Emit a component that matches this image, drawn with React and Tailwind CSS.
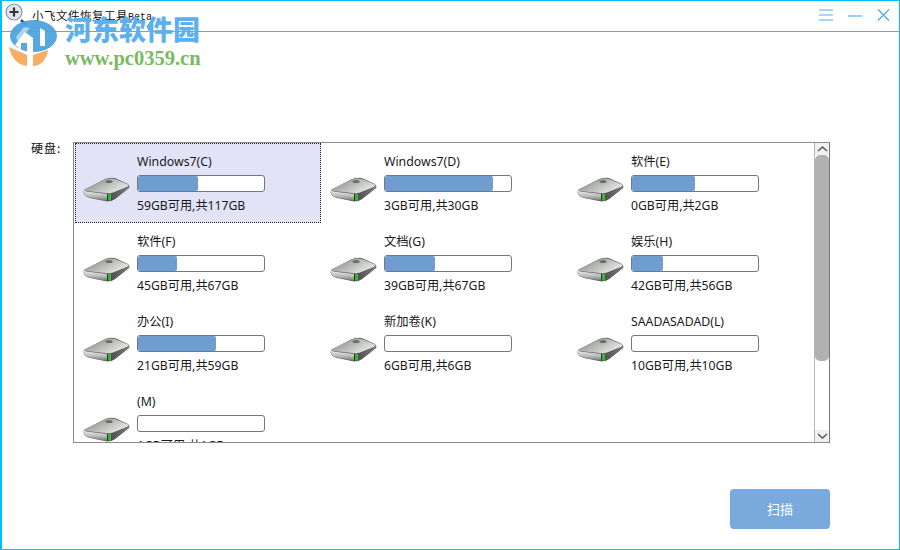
import React from "react";

const drives = [
  { n: "Windows7(C)", u: 60, t: "59GB可用,共117GB", sel: true },
  { n: "Windows7(D)", u: 108, t: "3GB可用,共30GB" },
  { n: "软件(E)", u: 63, t: "0GB可用,共2GB" },
  { n: "软件(F)", u: 39, t: "45GB可用,共67GB" },
  { n: "文档(G)", u: 50, t: "39GB可用,共67GB" },
  { n: "娱乐(H)", u: 31, t: "42GB可用,共56GB" },
  { n: "办公(I)", u: 78, t: "21GB可用,共59GB" },
  { n: "新加卷(K)", u: 0, t: "6GB可用,共6GB" },
  { n: "SAADASADAD(L)", u: 0, t: "10GB可用,共10GB" },
  { n: "(M)", u: 0, t: "1GB可用,共1GB" },
];

const font = { fontFamily: '"Noto Sans","Noto Sans CJK SC",sans-serif' };
const cjk = { fontFamily: '"Noto Sans CJK SC",sans-serif' };

function Disk() {
  return (
    <svg width="47" height="25" viewBox="0 0 47 25" className="block">
      <defs>
        <linearGradient id="dt" x1="0" y1="0" x2="1" y2="0.6">
          <stop offset="0" stopColor="#6f736f" />
          <stop offset="0.45" stopColor="#aeb1ae" />
          <stop offset="1" stopColor="#e6e7e6" />
        </linearGradient>
        <linearGradient id="df" x1="0" y1="0" x2="0" y2="1">
          <stop offset="0" stopColor="#f0f0f0" />
          <stop offset="0.55" stopColor="#bcbdbb" />
          <stop offset="1" stopColor="#6f716f" />
        </linearGradient>
        <linearGradient id="ds" x1="0" y1="0" x2="1" y2="0">
          <stop offset="0" stopColor="#434643" />
          <stop offset="1" stopColor="#7c7f7c" />
        </linearGradient>
      </defs>
      <path d="M1 13 L22 2 Q27 0 32 1 L45 7 Q47 9 46 11 L32 22 Q29 24.5 24 24.5 L7 21 Q1 19.5 0.5 15 Z" fill="#656865" />
      <path d="M1 12.5 L23 2 Q27 1 32 2 L45 7.5 Q46 9 44 10 L30 15.5 Q27 16.5 23 16 L3 14 Q1 13.5 1 12.5Z" fill="url(#dt)" />
      <path d="M1 13 L3 14.5 L24 17 L24 24 L7 20.5 Q1 19 1 15Z" fill="url(#df)" />
      <path d="M24 17 Q28 17 31 15.5 L46 9 Q47 10 46 11 L32 22 Q29 24 24 24 Z" fill="url(#ds)" />
      <ellipse cx="26" cy="4.5" rx="3.5" ry="1.5" fill="#6a6d6a" />
      <rect x="25" y="17" width="3" height="6.5" fill="#34b53a" />
      <rect x="24" y="17" width="1" height="7" fill="#1b3d1c" />
    </svg>
  );
}

function Item({ d }) {
  return (
    <div className="h-20 w-[247px] shrink-0">
      <div
        className={
          "h-20 w-[246px] flex items-start pl-[8px] pt-[9px] " +
          (d.sel ? "bg-[#e3e3f8] outline outline-1 -outline-offset-1 outline-dotted outline-[#222]" : "")
        }
      >
        <div className="mt-[25px] mr-[7px] shrink-0"><Disk /></div>
        <div className="flex flex-col w-[128px]">
          <div className="h-[20px] text-[12.3px] leading-[20px] text-[#1a1a1a] whitespace-nowrap">{d.n}</div>
          <div className="mt-[3px] h-[17px] w-[128px] rounded-[3px] border border-[#777] bg-white overflow-hidden">
            {d.u > 0 && <div className="h-full bg-[#6f9dcf] rounded-[2px]" style={{ width: d.u }} />}
          </div>
          <div className="mt-[4px] h-[20px] text-[12.2px] leading-[20px] text-[#1a1a1a] whitespace-nowrap">{d.t}</div>
        </div>
      </div>
    </div>
  );
}

export default function App() {
  return (
    <div className="relative w-[900px] h-[550px] bg-white overflow-hidden border border-l-2 border-[#00bfff] flex flex-col" style={font}>
      <div className="h-[31px] shrink-0 border-b border-[#999] flex items-center">
        <svg width="26" height="26" viewBox="0 0 26 26" className="ml-0 -mt-[4px] shrink-0">
          <circle cx="12" cy="11" r="8" fill="#dde4ec" stroke="#8496ad" strokeWidth="1.2" />
          <path d="M12 6.5v9M7.5 11h9" stroke="#333" strokeWidth="2.2" />
        </svg>
        <span className="ml-[4px] mt-[1px] text-[11.5px] tracking-[0.5px] leading-none text-[#111] whitespace-nowrap" style={cjk}>小飞文件恢复工具<span style={{ fontFamily: '"Liberation Mono",monospace' }} className="text-[10px] tracking-normal">Beta</span></span>
        <div className="ml-auto flex items-center mr-[9px] -mt-[3px] gap-[15px]">
          <svg width="14" height="12" viewBox="0 0 14 12"><path d="M0 1h14M0 6h14M0 11h14" stroke="#8ec8f5" strokeWidth="1.6" /></svg>
          <svg width="14" height="12" viewBox="0 0 14 12"><path d="M0 7h14" stroke="#55aef0" strokeWidth="1.2" /></svg>
          <svg width="13" height="12" viewBox="0 0 13 12"><path d="M1 0.5l11 11M12 0.5l-11 11" stroke="#55aef0" strokeWidth="1.4" /></svg>
        </div>
      </div>

      <div className="flex items-start pl-[29px] pt-[110px]">
        <div className="w-[42px] text-[12px] tracking-[1px] leading-[14px] text-[#111] -mt-[1px]" style={cjk}>硬盘:</div>
        <div className="w-[757px] h-[301px] border border-[#8c8c8c] border-r-[#777] flex bg-white">
          <div className="flex-1 overflow-hidden pl-[1px]">
            <div className="flex flex-wrap w-[741px]">
              {drives.map((d) => <Item key={d.n} d={d} />)}
            </div>
          </div>
          <div className="w-[15px] shrink-0 border-l border-[#b5b5b5] flex flex-col items-center bg-white">
            <div className="h-[12px] w-full flex items-center justify-center bg-[#f0f0f0]">
              <svg width="11" height="6" viewBox="0 0 11 6"><path d="M1 5l4.5-4 4.5 4" fill="none" stroke="#555" strokeWidth="1.4" /></svg>
            </div>
            <div className="w-full h-[206px] bg-[#b1b1b1] rounded-[5px]" />
            <div className="flex-1" />
            <div className="h-[12px] w-full flex items-center justify-center bg-[#f0f0f0]">
              <svg width="11" height="6" viewBox="0 0 11 6"><path d="M1 1l4.5 4 4.5-4" fill="none" stroke="#555" strokeWidth="1.4" /></svg>
            </div>
          </div>
        </div>
      </div>

      <div className="flex justify-end pr-[69px] pt-[46px]">
        <button className="w-[100px] h-[40px] rounded-[4px] bg-[#7aaadd] text-white text-[13px]" style={cjk}>扫描</button>
      </div>

      {/* watermark overlay */}
      <div className="absolute left-[3px] top-[12px] pointer-events-none flex">
        <svg width="60" height="58" viewBox="5 13 60 58" className="shrink-0">
          <path d="M21 20l5 5" stroke="#2b4a66" strokeWidth="2.5" />
          <ellipse cx="33.5" cy="36" rx="23.5" ry="16" fill="#4fa3de" fillOpacity="0.95" />
          <path d="M15 45 L25 32 L33 38 L33 53 L27 53 L27 43 L21 43 L21 50 Z" fill="#fff" />
          <path d="M40 28 L45 31 L45 46 L40 46 Z" fill="#fff" />
          <path d="M16 37 L24 27 L30 28 L18 42 Z" fill="#fff" fillOpacity="0.5" />
          <path d="M9 47 L27 55 L27 66 C17 65 11 57 9 47Z" fill="#f8ae62" />
          <path d="M33 55 L48 50 C47 59 41 66 33 66 Z" fill="#f8ae62" />
        </svg>
        <div className="flex flex-col">
          <div className="text-[27px] leading-[32px] text-[#5db0ec] whitespace-nowrap" style={{ ...cjk, fontWeight: 900 }}>河东软件园</div>
          <div className="text-[20.5px] leading-[22px] font-bold text-[#79b960] whitespace-nowrap mt-[2px]" style={{ fontFamily: '"Liberation Serif",serif' }}>www.pc0359.cn</div>
        </div>
      </div>
    </div>
  );
}
